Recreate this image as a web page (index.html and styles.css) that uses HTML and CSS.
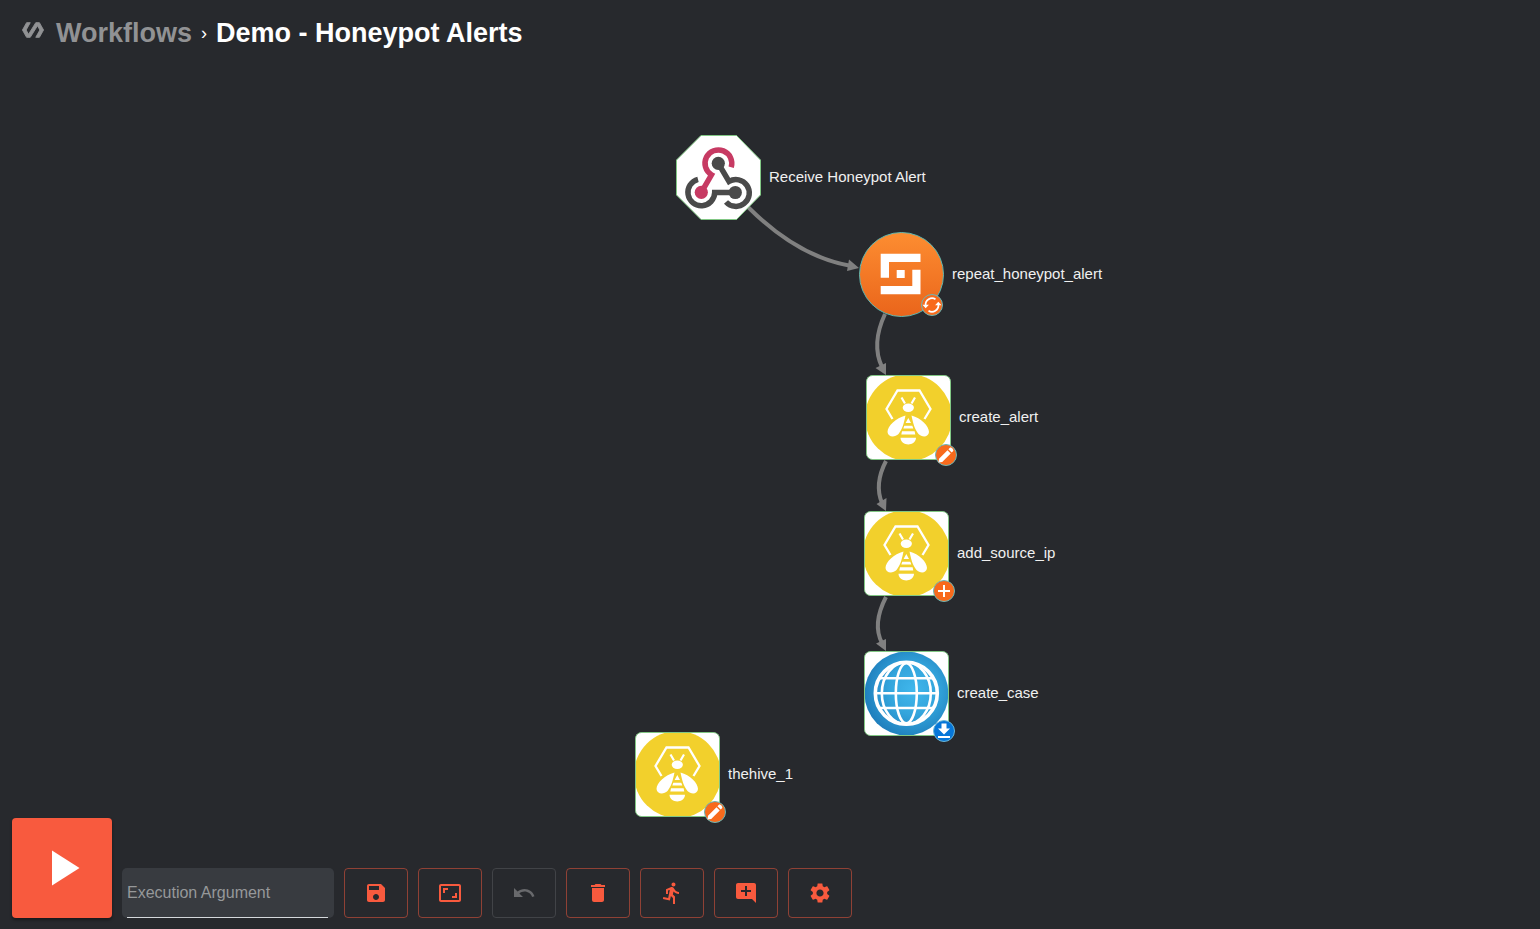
FILE: index.html
```html
<!DOCTYPE html>
<html lang="en">
<head>
<meta charset="utf-8">
<title>Demo - Honeypot Alerts</title>
<link rel="stylesheet" href="styles.css">
</head>
<body>
<svg class="defs" aria-hidden="true">
  <defs>
    <linearGradient id="orange" x1="0" y1="0" x2="0" y2="1"><stop offset="0" stop-color="#fd8d31"/><stop offset="1" stop-color="#ea651b"/></linearGradient>
    <radialGradient id="blue" cx="0.58" cy="0.46" r="0.58"><stop offset="0" stop-color="#40b7ec"/><stop offset="0.5" stop-color="#33a5dc"/><stop offset="1" stop-color="#1f7fbd"/></radialGradient>
    <clipPath id="tile"><rect x="0.5" y="0.5" width="84" height="84" rx="6"/></clipPath>
    <symbol id="hive" viewBox="0 0 85 85">
      <g clip-path="url(#tile)">
        <rect width="85" height="85" fill="#fff"/>
        <circle cx="42.500" cy="42.500" r="43.500" fill="#f2d02c"/>
      </g>
      <path d="M26.500 44 20.500 34 31.500 15.500H53.500L64.500 34 58.500 44" fill="none" stroke="#fff" stroke-width="2.300"/>
      <path d="M35.500 22.500 39 28.500M49 22.500 45.500 28.500" stroke="#fff" stroke-width="2.200"/>
      <ellipse cx="42.300" cy="32.800" rx="5.600" ry="4.200" fill="#fff"/>
      <path d="M39.500 40.500C30 43 21.500 51 21.500 57C22 62.500 29 62.500 32.500 59C36.500 54 38 48 39.500 40.500ZM45.500 40.500C55 43 63 51 63 57C62.500 62.500 56 62.500 52.500 59C48.500 54 47 48 45.500 40.500Z" fill="#fff"/>
      <path d="M42.300 43 45 48H39.600ZM38.300 50.800H46.300L47.300 53.500H37.300ZM36 56.300H48.600L49.300 59.500H35.300ZM34.500 62.800H50C50 67 46 69.500 42.300 69.500S34.500 67 34.500 62.800Z" fill="#fff"/>
      <rect x="0.500" y="0.500" width="84" height="84" rx="6" fill="none" stroke="#81c784"/>
    </symbol>
    <symbol id="pencil" viewBox="0 0 22 22">
      <circle cx="11" cy="11" r="10.500" fill="#f86a1c" stroke="#6cb6b6"/>
      <path d="M3.500 18.500 4 14.800 12.500 6.300 15.700 9.500 7.200 18ZM13.400 5.300 14.900 3.800C16 2.700 19.100 5.900 18.200 7L16.700 8.600Z" fill="#fff"/>
    </symbol>
  </defs>
</svg>

<div class="app">
  <header class="crumbs">
    <a class="back" href="#workflows">
      <svg class="logo" viewBox="0 0 24 24"><path fill="currentColor" stroke="currentColor" d="M19 4h-4L7.110 16.630 4.500 12 9 4H5L.500 12 5 20h4l7.890-12.630L19.500 12 15 20h4l4.500-8z"/></svg>
      <h2>Workflows</h2>
    </a>
    <span class="chevron">›</span>
    <h2>Demo - Honeypot Alerts</h2>
  </header>

  <main class="canvas">
    <svg class="edges" aria-hidden="true">
      <g fill="none" stroke="#808080" stroke-width="4">
        <path d="M748 207Q797 256 849 265.500"/>
        <path d="M885 314Q871 344 882 367"/>
        <path d="M886 461Q874 484 882 503"/>
        <path d="M886 597Q872 624 882 643"/>
      </g>
      <path fill="#808080" d="M859 268 847 271 849 259.500ZM886 375 875.500 368 886 363ZM886 511 876.500 504 886.500 498ZM886 651 876 643.500 886 639Z"/>
    </svg>

    <div class="node webhook">
      <svg class="art" viewBox="0 0 85 85">
        <path d="M25 .500H60.500L84.500 25V60L60.500 84.500H25L.500 60V25Z" fill="#fff" stroke="#81c784"/>
        <g fill="none" stroke-width="5.500">
          <path d="M42.300 28.300 53 46.500A13.400 13.400 0 1 1 50 67" stroke="#4a4a4a"/>
          <path d="M22 44.300A13.400 13.400 0 1 0 38.700 57.500H59" stroke="#4a4a4a"/>
          <path d="M55.200 32.300A13.400 13.400 0 1 0 35.500 39.800L25.300 57.300" stroke="#c73a63"/>
        </g>
        <circle cx="42.300" cy="28.300" r="6.600" fill="#4a4a4a"/>
        <circle cx="59.300" cy="57.500" r="6.600" fill="#4a4a4a"/>
        <circle cx="25.300" cy="57.300" r="6.600" fill="#c73a63"/>
      </svg>
      <span>Receive Honeypot Alert</span>
    </div>

    <div class="node repeat">
      <svg class="art" viewBox="0 0 85 85">
        <circle cx="42.500" cy="42.500" r="42" fill="url(#orange)" stroke="#5fb7b0"/>
        <path d="M21.700 21.700H61.500V30H30V45.700H21.700ZM53.300 37.700H61.500V62.300H21.700V54H53.300ZM37.700 38H45.700V46H37.700Z" fill="#fff"/>
      </svg>
      <svg class="badge" viewBox="0 0 22 22">
        <circle cx="11" cy="11" r="10.500" fill="#f86a1c" stroke="#6cb6b6"/>
        <path d="M14.500 5.300A6.500 6.500 0 0 0 4.600 11.500M7.500 16.700A6.500 6.500 0 0 0 17.400 10.500" fill="none" stroke="#fff" stroke-width="1.700"/>
        <path d="M1.500 10.800H7.900L4.700 14.200ZM14.100 11.200H20.500L17.300 7.800Z" fill="#fff"/>
      </svg>
      <span>repeat_honeypot_alert</span>
    </div>

    <div class="node create-alert">
      <svg class="art"><use href="#hive"/></svg>
      <svg class="badge"><use href="#pencil"/></svg>
      <span>create_alert</span>
    </div>

    <div class="node add-source">
      <svg class="art"><use href="#hive"/></svg>
      <svg class="badge" viewBox="0 0 22 22"><circle cx="11" cy="11" r="10.500" fill="#f86a1c" stroke="#6cb6b6"/><path d="M11 5V17M5 11H17" stroke="#fff" stroke-width="2"/></svg>
      <span>add_source_ip</span>
    </div>

    <div class="node create-case">
      <svg class="art" viewBox="0 0 85 85">
        <rect x="0.500" y="0.500" width="84" height="84" rx="6" fill="#fff"/>
        <circle cx="42.500" cy="42.500" r="42" fill="url(#blue)"/>
        <g fill="none" stroke="#fff" stroke-width="2.600">
          <circle cx="42.300" cy="42.300" r="31" stroke-width="3.600"/>
          <ellipse cx="42.300" cy="42.300" rx="10.500" ry="30"/>
          <ellipse cx="42.300" cy="42.300" rx="24.500" ry="31"/>
          <path d="M15 27.300H70M11 42.300H74M15 57H70"/>
        </g>
        <rect x="0.500" y="0.500" width="84" height="84" rx="6" fill="none" stroke="#81c784"/>
      </svg>
      <svg class="badge" viewBox="0 0 22 22"><circle cx="11" cy="11" r="10.500" fill="#0676d8" stroke="#6cb6d6"/><path d="M8.500 3.500H13.500V8.500H17L11 14.500 5 8.500H8.500ZM5 16H17V18H5Z" fill="#fff"/></svg>
      <span>create_case</span>
    </div>

    <div class="node thehive">
      <svg class="art"><use href="#hive"/></svg>
      <svg class="badge"><use href="#pencil"/></svg>
      <span>thehive_1</span>
    </div>
  </main>

  <footer class="toolbar">
    <button class="run" aria-label="Run workflow"><svg viewBox="0 0 24 24"><path fill="currentColor" d="M8 5v14l11-7z"/></svg></button>
    <div class="field"><input type="text" aria-label="Execution Argument" placeholder="Execution Argument"></div>
    <button class="tool" aria-label="Save"><svg viewBox="0 0 24 24"><path d="M17 3H5c-1.110 0-2 .900-2 2v14c0 1.100.890 2 2 2h14c1.100 0 2-.900 2-2V7l-4-4zm-5 16c-1.660 0-3-1.340-3-3s1.340-3 3-3 3 1.340 3 3-1.340 3-3 3zm3-10H5V5h10v4z"/></svg></button>
    <button class="tool" aria-label="Fit to screen"><svg viewBox="0 0 24 24"><path d="M19 12h-2v3h-3v2h5v-5zM7 9h3V7H5v5h2V9zm14-6H3c-1.100 0-2 .900-2 2v14c0 1.100.900 2 2 2h18c1.100 0 2-.900 2-2V5c0-1.100-.900-2-2-2zm0 16.010H3V4.990h18v14.020z"/></svg></button>
    <button class="tool" aria-label="Undo" disabled><svg viewBox="0 0 24 24"><path d="M12.500 8c-2.650 0-5.050.990-6.900 2.600L2 7v9h9l-3.620-3.620c1.390-1.160 3.160-1.880 5.120-1.880 3.540 0 6.550 2.310 7.600 5.500l2.370-.780C21.080 11.030 17.150 8 12.500 8z"/></svg></button>
    <button class="tool" aria-label="Delete"><svg viewBox="0 0 24 24"><path d="M6 19c0 1.100.900 2 2 2h8c1.100 0 2-.900 2-2V7H6v12zM19 4h-3.500l-1-1h-5l-1 1H5v2h14V4z"/></svg></button>
    <button class="tool" aria-label="Show executions"><svg viewBox="0 0 24 24"><path d="M13.490 5.480c1.100 0 2-.900 2-2s-.900-2-2-2-2 .900-2 2 .900 2 2 2zm-3.600 13.900l1-4.400 2.100 2v6h2v-7.500l-2.100-2 .600-3c1.300 1.500 3.300 2.500 5.500 2.500v-2c-1.900 0-3.500-1-4.300-2.400l-1-1.600c-.400-.600-1-1-1.700-1-.300 0-.500.100-.800.100l-5.200 2.200v4.700h2v-3.400l1.800-.700-1.600 8.100-4.900-1-.400 2 7 1.400z"/></svg></button>
    <button class="tool" aria-label="Add comment"><svg viewBox="0 0 24 24"><path d="M21.990 4c0-1.100-.890-2-1.990-2H4c-1.100 0-2 .900-2 2v12c0 1.100.900 2 2 2h14l4 4-.010-18zM17 11h-4v4h-2v-4H7V9h4V5h2v4h4v2z"/></svg></button>
    <button class="tool" aria-label="Settings"><svg viewBox="0 0 24 24"><path d="M19.140 12.940c.040-.300.060-.610.060-.940 0-.320-.020-.640-.070-.940l2.030-1.580c.180-.140.230-.410.120-.610l-1.920-3.320c-.120-.220-.370-.290-.590-.220l-2.390.960c-.500-.380-1.030-.700-1.620-.940l-.360-2.540c-.040-.240-.240-.410-.480-.410h-3.840c-.240 0-.430.170-.470.410l-.360 2.540c-.590.240-1.130.570-1.620.940l-2.390-.960c-.220-.080-.470 0-.590.220L2.740 8.870c-.120.210-.080.470.120.610l2.030 1.580c-.050.300-.090.630-.090.940s.020.640.070.940l-2.030 1.580c-.180.140-.230.410-.120.610l1.920 3.320c.120.220.370.290.590.220l2.390-.960c.500.380 1.030.700 1.620.940l.360 2.540c.050.240.240.410.480.410h3.840c.240 0 .440-.170.470-.410l.360-2.540c.590-.240 1.130-.560 1.620-.940l2.390.960c.220.080.470 0 .590-.220l1.920-3.320c.120-.220.070-.470-.120-.610l-2.010-1.580zM12 15.600c-1.980 0-3.600-1.620-3.600-3.600s1.620-3.600 3.600-3.600 3.600 1.620 3.600 3.600-1.620 3.600-3.600 3.600z"/></svg></button>
  </footer>
</div>
</body>
</html>
```

FILE: styles.css
```css
* { box-sizing: border-box; }

body {
  margin: 0;
  background: #27292d;
  color: #fff;
  font-family: "Liberation Sans", Arial, sans-serif;
}

.defs { position: absolute; width: 0; height: 0; }

.app { position: relative; min-height: 100vh; overflow: hidden; }

.crumbs {
  position: relative;
  z-index: 1;
  display: flex;
  align-items: center;
  gap: 9px;
  padding: 16px 22px;
  font-size: 18px;
}

.crumbs h2 { margin: 0; font-size: 27px; line-height: 34px; }

.back {
  display: flex;
  gap: 12px;
  color: #919294;
  text-decoration: none;
}

.logo { width: 22px; height: 22px; margin-top: 3px; }

/* Free canvas: nodes are placed by their coordinates in the graph. */
.canvas { position: absolute; inset: 0; }
.edges { position: absolute; width: 100%; height: 100%; }

.node {
  position: absolute;
  display: flex;
  align-items: center;
  gap: 8px;
  font-size: 15px;
  line-height: 20px;
  color: #f0f0f0;
  white-space: nowrap;
}

.node span { padding-bottom: 2px; }

.art { width: 85px; height: 85px; }

.badge {
  position: absolute;
  left: 69px;
  top: 69px;
  width: 22px;
  height: 22px;
}

.webhook { left: 676px; top: 135px; }
.repeat { left: 859px; top: 232px; }
.repeat .badge { left: 62px; top: 62px; }
.create-alert { left: 866px; top: 375px; }
.add-source { left: 864px; top: 511px; }
.create-case { left: 864px; top: 651px; }
.thehive { left: 635px; top: 732px; }

.toolbar {
  position: absolute;
  left: 12px;
  bottom: 11px;
  display: flex;
  align-items: flex-end;
  gap: 10px;
}

.run {
  display: grid;
  place-items: center;
  width: 100px;
  height: 100px;
  padding: 0;
  border: 0;
  border-radius: 4px;
  background: #f85a3e;
  color: #fff;
  box-shadow: 0 2px 3px rgba(0, 0, 0, 0.4);
}

.run svg { width: 60px; height: 60px; }

.field {
  display: flex;
  width: 212px;
  height: 50px;
  padding: 0 6px 0 5px;
  border-radius: 5px;
  background: #383b40;
}

.field input {
  width: 100%;
  padding: 0;
  border: 0;
  border-bottom: 1px solid #d5d9dc;
  background: transparent;
  color: #fff;
  font: 16px/20px "Liberation Sans", Arial, sans-serif;
}

.field input::placeholder { color: #96989a; opacity: 1; }

.tool {
  display: grid;
  place-items: center;
  width: 64px;
  height: 50px;
  padding: 0;
  border: 1px solid rgba(248, 90, 62, 0.5);
  border-radius: 4px;
  background: transparent;
  color: #f85a3e;
}

.tool svg { width: 24px; height: 24px; fill: currentColor; }
.tool:disabled { border-color: #414347; color: #68696c; }
```
